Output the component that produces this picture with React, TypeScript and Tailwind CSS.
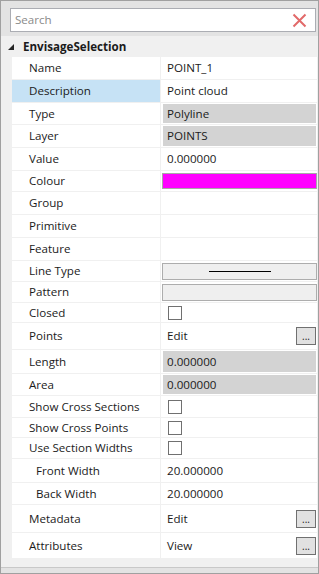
import React from 'react';

type Kind = 'text' | 'gray' | 'colour' | 'line' | 'box' | 'check' | 'button' | 'empty';

const rows: { label: string; h: string; kind: Kind; value?: string; indent?: boolean; selected?: boolean }[] = [
  { label: 'Name', h: 'h-[23px]', kind: 'text', value: 'POINT_1' },
  { label: 'Description', h: 'h-[23px]', kind: 'text', value: 'Point cloud', selected: true },
  { label: 'Type', h: 'h-[22px]', kind: 'gray', value: 'Polyline' },
  { label: 'Layer', h: 'h-[23px]', kind: 'gray', value: 'POINTS' },
  { label: 'Value', h: 'h-[23px]', kind: 'text', value: '0.000000' },
  { label: 'Colour', h: 'h-[21px]', kind: 'colour' },
  { label: 'Group', h: 'h-[23px]', kind: 'empty' },
  { label: 'Primitive', h: 'h-[23px]', kind: 'empty' },
  { label: 'Feature', h: 'h-[23px]', kind: 'empty' },
  { label: 'Line Type', h: 'h-[21px]', kind: 'line' },
  { label: 'Pattern', h: 'h-[21px]', kind: 'box' },
  { label: 'Closed', h: 'h-[20px]', kind: 'check' },
  { label: 'Points', h: 'h-[27px]', kind: 'button', value: 'Edit' },
  { label: 'Length', h: 'h-[24px]', kind: 'gray', value: '0.000000' },
  { label: 'Area', h: 'h-[22px]', kind: 'gray', value: '0.000000' },
  { label: 'Show Cross Sections', h: 'h-[22px]', kind: 'check' },
  { label: 'Show Cross Points', h: 'h-[20px]', kind: 'check' },
  { label: 'Use Section Widths', h: 'h-[21px]', kind: 'check' },
  { label: 'Front Width', h: 'h-[24px]', kind: 'text', value: '20.000000', indent: true },
  { label: 'Back Width', h: 'h-[22px]', kind: 'text', value: '20.000000', indent: true },
  { label: 'Metadata', h: 'h-[28px]', kind: 'button', value: 'Edit' },
  { label: 'Attributes', h: 'h-[26px]', kind: 'button', value: 'View' },
];

function ValueCell({ kind, value }: { kind: Kind; value?: string }) {
  if (kind === 'text') return <div className="flex-1 pl-[6px] flex items-center">{value}</div>;
  if (kind === 'gray')
    return (
      <div className="flex-1 flex items-stretch py-[1px] pl-[2px] pr-[1px]">
        <div className="flex-1 bg-[#d3d3d3] pl-[4px] flex items-center">{value}</div>
      </div>
    );
  if (kind === 'colour')
    return (
      <div className="flex-1 flex items-center pl-[1px]">
        <div className="flex-1 h-[16px] bg-[#ff00ff] border border-[#a8a8a8]" />
      </div>
    );
  if (kind === 'line')
    return (
      <div className="flex-1 flex items-center pl-[1px]">
        <div className="flex-1 h-[17px] bg-[#efefef] border border-[#adadad] flex items-center justify-center">
          <div className="w-[62px] h-[1px] bg-black" />
        </div>
      </div>
    );
  if (kind === 'box')
    return (
      <div className="flex-1 flex items-center pl-[1px]">
        <div className="flex-1 h-[17px] bg-[#efefef] border border-[#adadad]" />
      </div>
    );
  if (kind === 'check')
    return (
      <div className="flex-1 flex items-center pl-[7px]">
        <div className="w-[14px] h-[14px] border border-[#707070] bg-white" />
      </div>
    );
  if (kind === 'button')
    return (
      <div className="flex-1 flex items-center pl-[6px]">
        <span className="flex-1">{value}</span>
        <div className="w-[20px] h-[18px] mr-[1px] bg-[#e1e1e1] border border-[#707070] flex items-end justify-center text-[10px] leading-[12px] pb-[2px]">
          ...
        </div>
      </div>
    );
  return <div className="flex-1" />;
}

export default function App() {
  return (
    <div className="w-[319px] h-[574px] border border-[#a0a0a0] bg-[#f0f0f0] flex flex-col font-['Segoe_UI','Open_Sans',sans-serif] text-[11.6px] text-[#1b1b1b] overflow-hidden">
      <div className="h-[35px] bg-[#e3e3e3] pl-[9px] pr-[2px] pt-[7px] shrink-0">
        <div className="h-[24px] bg-white border border-[#abadb3] flex items-center pl-[4px] pr-[8px]">
          <span className="flex-1 text-[#8a8a8a]">Search</span>
          <svg width="15" height="15" viewBox="0 0 15 15">
            <path d="M1.5 1.5 L13.5 13.5 M13.5 1.5 L1.5 13.5" stroke="#e26a6a" strokeWidth="2" />
          </svg>
        </div>
      </div>
      <div className="h-[21px] flex items-center shrink-0 bg-[#f0f0f0]">
        <svg width="6" height="6" viewBox="0 0 6 6" className="ml-[7px] mr-[9px]">
          <path d="M6 0 L6 6 L0 6 Z" fill="#262626" />
        </svg>
        <span className="font-bold">EnvisageSelection</span>
      </div>
      <div className="pl-[11px] pr-[1px] flex flex-col shrink-0">
        {rows.map((r) => (
          <div key={r.label} className={`${r.h} flex border-b border-[#f0f0f0] bg-white`}>
            <div
              className={`w-[149px] shrink-0 flex items-center border-r border-[#f0f0f0] ${
                r.indent ? 'pl-[24px]' : 'pl-[17px]'
              } ${r.selected ? 'bg-[#c6e2f5]' : ''}`}
            >
              {r.label}
            </div>
            <ValueCell kind={r.kind} value={r.value} />
          </div>
        ))}
      </div>
      <div className="flex-1" />
      <div className="h-[6px] border-t border-[#c8c8c8] bg-[#e3e3e3] shrink-0" />
    </div>
  );
}
